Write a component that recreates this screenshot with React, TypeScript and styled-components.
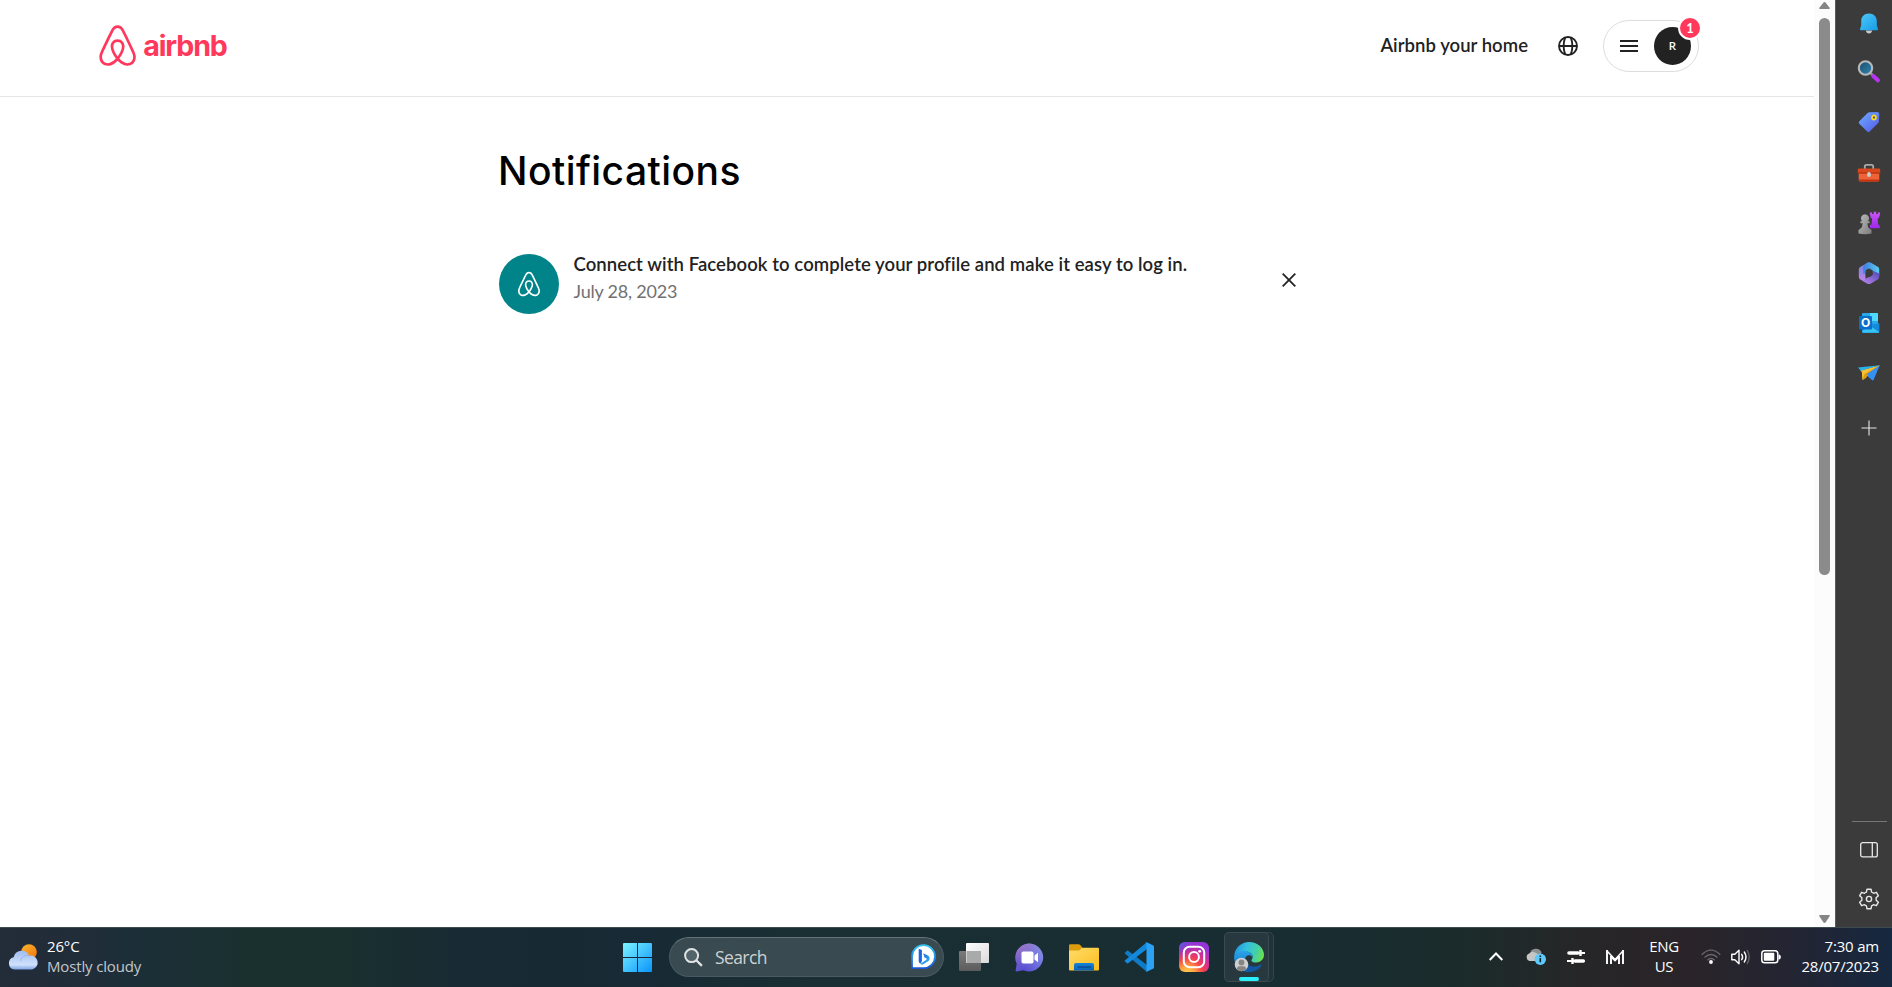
import React from 'react';
import styled, { createGlobalStyle } from 'styled-components';

const GlobalStyle = createGlobalStyle`
  *, *::before, *::after { box-sizing: border-box; }
  html, body { margin: 0; padding: 0; background: #fff; overflow: hidden; }
  svg { display: block; flex: none; overflow: visible; }
`;

const PAGE_FONT = `Lato, "Liberation Sans", sans-serif`;
const SYSTEM_FONT = `"Open Sans", "Noto Sans", sans-serif`;

const Screen = styled.div`
  display: grid;
  grid-template-rows: 927px 60px;
  width: 1892px;
  height: 987px;
`;

const Browser = styled.div`
  display: grid;
  grid-template-columns: 1814px 21px 57px;
`;

/* ---------- Page ---------- */

const Page = styled.div`
  display: flex;
  flex-direction: column;
  background: #fff;
  font-family: ${PAGE_FONT};
  color: #222;
`;

const Header = styled.header`
  display: flex;
  justify-content: space-between;
  align-items: flex-start;
  height: 97px;
  padding: 20px 115px 0 95.6px;
  border-bottom: 1px solid #e6e6e6;
`;

const Brand = styled.a`
  display: flex;
  align-items: center;
  height: 52px;
  color: #ff385c;
`;

const Wordmark = styled.span`
  margin: 0 0 0 4.500px;
  font: 700 28.6px/40px Inter, sans-serif;
  letter-spacing: -1.15px;
`;

const HeaderActions = styled.nav`
  display: flex;
  align-items: center;
  height: 52px;
`;

const HostLink = styled.a`
  margin: 0 30px 2px 0;
  font-size: 18.5px;
  font-weight: 600;
  line-height: 26px;
  letter-spacing: 0.04px;
  white-space: nowrap;
`;

const UserMenu = styled.div`
  position: relative;
  display: flex;
  align-items: center;
  justify-content: space-between;
  width: 96px;
  height: 52px;
  margin-left: 25px;
  padding: 0 7px 0 16px;
  border: 1px solid #ddd;
  border-radius: 26px;
`;

const Avatar = styled.div`
  display: grid;
  place-items: center;
  width: 37px;
  height: 38px;
  border-radius: 50%;
  background: #222;
  color: #fff;
  font-size: 11.5px;
  font-weight: 600;
  line-height: 14px;
`;

const CountBadge = styled.span`
  position: absolute;
  top: -5px;
  right: -4px;
  display: grid;
  place-items: center;
  width: 24px;
  height: 24px;
  border: 2px solid #fff;
  border-radius: 50%;
  background: #ff385c;
  color: #fff;
  font: 700 13px/14px ${PAGE_FONT};
`;

const Main = styled.main`
  width: 816px;
  margin-left: 499px;
  padding-top: 48px;
`;

const Title = styled.h1`
  height: 48px;
  margin: 0 0 57px -1px;
  font-family: Inter, sans-serif;
  font-size: 39px;
  font-weight: 500;
  line-height: 51px;
  letter-spacing: 0.45px;
  color: #000;
`;

const Notification = styled.article`
  display: flex;
  align-items: flex-start;
`;

const NotificationIcon = styled.div`
  display: grid;
  place-items: center;
  width: 60px;
  height: 60px;
  margin: 4px 14.500px 0 0;
  border-radius: 50%;
  background: #008489;
  color: #fff;
`;

const NotificationBody = styled.div`
  width: 708.500px;
  margin-top: 1px;
  line-height: 27px;
`;

const Message = styled.div`
  font-size: 18.5px;
  font-weight: 600;
  letter-spacing: 0.08px;
  white-space: nowrap;
`;

const DateText = styled.div`
  font-size: 18px;
  letter-spacing: -0.2px;
  color: #717171;
`;

const CloseButton = styled.button`
  margin: 23px 0 0;
  padding: 0;
  border: 0;
  background: none;
`;

/* ---------- Scrollbar ---------- */

const Scrollbar = styled.div`
  display: flex;
  flex-direction: column;
  align-items: center;
  padding: 2px 0 4px;
  background: #fcfcfc;
`;

const Thumb = styled.div`
  width: 11px;
  height: 557px;
  margin: 9px 0 auto;
  border-radius: 6px;
  background: #8b8b8b;
`;

/* ---------- Edge sidebar ---------- */

const Sidebar = styled.aside`
  display: grid;
  grid-template-rows: 45px 52px 50px 51px 49px 51px 50px 50px 59px 1fr 1px 56px 42px;
  justify-items: center;
  align-items: center;
  height: 927px;
  padding: 0 0 7px 10px;
  border-left: 1px solid #5a5a5a;
  background: #3b3b3b;
`;

const Spacer = styled.div``;

const Divider = styled.div`
  width: 35px;
  height: 1px;
  background: #767676;
`;

/* ---------- Taskbar ---------- */

const Taskbar = styled.footer`
  display: grid;
  grid-template-columns: 623px 652px 1fr;
  border-top: 1px solid #3d4c52;
  background: linear-gradient(90deg, #232c39 0, #212d39 90px, #1b2f38 135px, #1a302e 260px, #19302e 330px,
    #182a34 480px, #172a35 640px, #192f33 800px, #182d31 1300px, #1b2b2b 1460px, #262627 1580px, #2a2429 1690px,
    #222533 1800px, #162840 1892px);
  color: #fff;
  font-family: ${SYSTEM_FONT};
  font-size: 15px;
  line-height: 20px;
`;

const Weather = styled.div`
  display: flex;
  align-items: center;
  gap: 8.5px;
  padding: 0 0 2px 7.5px;
`;

const WeatherText = styled.div`
  margin-top: -2px;
  letter-spacing: -0.15px;
`;

const Condition = styled.div`
  color: #c3c8cb;
`;

const Apps = styled.div`
  display: flex;
  align-items: center;
  padding-bottom: 1px;
`;

const SearchBox = styled.div`
  display: flex;
  align-items: center;
  width: 275px;
  height: 40px;
  margin: 0 2.5px 0 17px;
  padding: 0 7px 0 14px;
  border: 1px solid #4a5a60;
  border-top-color: #66737a;
  border-radius: 20px;
  background: #394a50;
`;

const SearchLabel = styled.span`
  flex: 1;
  margin-left: 12px;
  font-size: 17.5px;
  letter-spacing: -0.6px;
  color: #cdd2d4;
`;

const AppSlot = styled.div`
  display: grid;
  place-items: center;
  width: 55px;
  height: 50px;
`;

const ActiveApp = styled.div`
  position: relative;
  display: grid;
  place-items: center;
  width: 50px;
  height: 50px;
  margin-left: 2.5px;
  border: 1px solid #33454a;
  border-radius: 5px;
  background: #203438;
`;

const ActiveWindow = styled.div`
  position: absolute;
  inset: -1px 4px -1px -1px;
  border: 1px solid #3b4b50;
  border-radius: 5px;
  background: #27393e;
`;

const ActiveIcon = styled.div`
  position: relative;
`;

const ActiveMark = styled.div`
  position: absolute;
  left: 14px;
  bottom: 0;
  width: 20px;
  height: 4px;
  border-radius: 2px;
  background: #2bf0fb;
`;

const Tray = styled.div`
  display: flex;
  align-items: center;
  justify-content: flex-end;
  padding: 0 13px 2px 0;
`;

const TrayItem = styled.div<{ $gap: number }>`
  margin-right: ${({ $gap }) => $gap}px;
`;

const Language = styled.div`
  width: 32px;
  margin: -1px 21px 0 0;
  letter-spacing: -0.3px;
  text-align: center;
`;

const Clock = styled.div`
  width: 78px;
  margin-top: -2px;
  letter-spacing: -0.2px;
  text-align: right;
  white-space: nowrap;
`;

/* ---------- Drawings ---------- */

const Belo = ({ size }: { size: number }) => (
  <svg width={size} height={size} viewBox="0 0 32 32" fill="currentColor">
    <path d="M16 1c2.008 0 3.463.963 4.751 3.269l.533 1.025c1.954 3.83 6.114 12.54 7.1 14.836l.145.353c.667 1.591.91 2.472.96 3.396l.01.415.001.228c0 4.062-2.877 6.478-6.357 6.478-2.224 0-4.556-1.258-6.709-3.386l-.257-.26-.172-.179h-.011l-.176.185c-2.044 2.1-4.267 3.42-6.414 3.615l-.28.019-.267.006C5.377 31 2.5 28.584 2.5 24.522l.005-.469c.026-.928.23-1.768.83-3.244l.216-.524c.966-2.298 6.083-12.989 7.707-16.034C12.537 1.963 13.992 1 16 1zm0 2c-1.239 0-2.053.539-2.987 2.21l-.523 1.008c-1.926 3.776-6.06 12.43-7.031 14.692l-.345.836c-.427 1.071-.573 1.655-.605 2.24l-.009.33v.206C4.5 27.395 6.411 29 8.857 29c1.773 0 3.87-1.236 5.831-3.354-2.295-2.938-3.855-6.45-3.855-8.91 0-2.913 1.933-5.386 5.178-5.42 3.223.034 5.156 2.507 5.156 5.42 0 2.456-1.555 5.96-3.855 8.91C19.277 27.766 21.37 29 23.142 29c2.447 0 4.358-1.605 4.358-4.478l-.004-.411c-.019-.672-.17-1.296-.714-2.62l-.248-.6c-1.065-2.478-5.993-12.768-7.538-15.664C18.053 3.539 17.24 3 16 3zm.01 10.316c-2.01.021-3.177 1.514-3.177 3.42 0 1.797 1.18 4.58 2.955 7.044l.21.287.174-.234c1.73-2.385 2.898-5.066 2.989-6.875l.006-.221c0-1.906-1.167-3.4-3.156-3.421z" />
  </svg>
);

const Globe = () => (
  <svg width="20" height="20" viewBox="0 0 20 20" fill="none" stroke="#222" strokeWidth="1.9">
    <circle cx="10" cy="10" r="9" />
    <path d="M1 10h18M7.2 1.4C5.2 6.8 5.2 13.200 7.200 18.600M12.800 1.400C14.800 6.800 14.800 13.200 12.800 18.600" />
  </svg>
);

const Hamburger = () => (
  <svg width="18" height="14" viewBox="0 0 18 14" stroke="#222" strokeWidth="2">
    <path d="M0 2h18M0 7h18M0 12h18" />
  </svg>
);

const Close = () => (
  <svg width="14" height="14" viewBox="0 0 14 14" stroke="#222" strokeWidth="1.800">
    <path d="M.7.7l12.600 12.600M13.300.7L.7 13.300" />
  </svg>
);

const ArrowUp = () => (
  <svg width="11" height="7" viewBox="0 0 11 7" fill="#858585">
    <path d="M5.500 0Q6.200 0 6.700.7L10.800 6Q11.100 7 10 7H1Q-.1 7 .2 6L4.300.7Q4.800 0 5.500 0z" />
  </svg>
);

const ArrowDown = () => (
  <svg width="11" height="8" viewBox="0 0 11 8" fill="#858585">
    <path d="M5.500 8Q4.800 8 4.300 7.300L.2 1.100Q-.1 0 1 0h9q1.100 0 .8 1.100L6.700 7.300Q6.200 8 5.500 8z" />
  </svg>
);

const Bell = () => (
  <svg width="24" height="24" viewBox="0 0 24 24">
    <defs>
      <linearGradient id="bell" x1="0" y1="0" x2="1" y2="1">
        <stop stopColor="#4fc8f5" />
        <stop offset="1" stopColor="#149be8" />
      </linearGradient>
    </defs>
    <path d="M8.800 19.500h6.400q-.6 3-3.200 3t-3.200-3z" fill="#c9c9c9" />
    <path d="M12 2.500c4.800 0 7.800 3.200 7.800 7.600v4.200l1.200 3.600q.3 1.400-1.100 1.400H4.100q-1.400 0-1.100-1.400l1.200-3.600v-4.200c0-4.400 3-7.600 7.800-7.600z" fill="url(#bell)" />
  </svg>
);

const SearchTool = () => (
  <svg width="24" height="24" viewBox="0 0 24 24">
    <defs>
      <linearGradient id="lens" x1="0" y1="0" x2="1" y2="1">
        <stop stopColor="#1d4d68" />
        <stop offset="1" stopColor="#2d86b5" />
      </linearGradient>
    </defs>
    <path d="M13.500 14l3.500 3.500" stroke="#8e8e8e" strokeWidth="2.500" />
    <path d="M16.500 17.200l4.400 4.100" stroke="#b733f2" strokeWidth="4.200" strokeLinecap="round" />
    <circle cx="8.500" cy="9" r="6.700" fill="url(#lens)" stroke="#b9b9b9" strokeWidth="2.100" />
  </svg>
);

const Tag = () => (
  <svg width="24" height="24" viewBox="0 0 24 24">
    <defs>
      <linearGradient id="tag" x1="0" y1="0" x2="1" y2="1">
        <stop stopColor="#6fb0ff" />
        <stop offset="1" stopColor="#5356e8" />
      </linearGradient>
    </defs>
    <path d="M12.500 2.200l8-.3q1.800 0 1.800 1.800l-.4 7.600q0 .9-.7 1.600l-8.600 8.700q-1.200 1.200-2.400 0L2.300 13.700q-1.200-1.200 0-2.400l8.600-8.500q.7-.6 1.600-.6z" fill="url(#tag)" />
    <circle cx="17" cy="7.500" r="2" fill="#4a4460" stroke="#f5d628" strokeWidth="1.800" />
  </svg>
);

const Toolbox = () => (
  <svg width="24" height="24" viewBox="0 0 24 24">
    <path d="M7.800 8V5.400q0-1.600 1.600-1.600h5.200q1.600 0 1.600 1.600V8" fill="none" stroke="#a9a9a9" strokeWidth="1.800" />
    <rect x="1.700" y="11" width="20.600" height="9.600" rx="1.500" fill="#ee6238" />
    <path d="M1.700 18.600h20.600q0 2-1.500 2H3.200q-1.500 0-1.500-2z" fill="#c8340f" />
    <rect x=".8" y="7.500" width="22.400" height="5" rx="1.200" fill="#d9481f" />
    <path d="M.8 11.500h22.400v1H.8z" fill="#a92c0a" />
    <rect x="10.200" y="11" width="3.600" height="5" rx="1.800" fill="#c8cdd0" />
  </svg>
);

const Chess = () => (
  <svg width="24" height="24" viewBox="0 0 24 24">
    <defs>
      <linearGradient id="rook" x1="0" y1="0" x2="0" y2="1">
        <stop stopColor="#c957f5" />
        <stop offset="1" stopColor="#9c28ec" />
      </linearGradient>
      <linearGradient id="pawn" x1="0" y1="0" x2="1" y2="1">
        <stop stopColor="#bcbcbc" />
        <stop offset="1" stopColor="#7d7d7d" />
      </linearGradient>
    </defs>
    <path d="M13 1.600l1.700-.4.500 1.800 1.500-.1V.8h2.600v2.100l1.500.1.500-1.800 1.700.4.200.9-1.200 4.200-1.400.9.500 5.600 1.700 1.500v2.500h-9.600l-.4-3 1.800-1 .5-5.600-1.400-.9L12.800 2.500z" fill="url(#rook)" />
    <path d="M8 3.200a4.200 4.200 0 0 1 3 7h1.600v2h-2.200q.2 4 1.700 5l2.400 1.800v3.600q-6.500 1.200-13 0V19l2.400-1.800q1.500-1 1.700-5H3.400v-2H5a4.200 4.200 0 0 1 3-7z" fill="url(#pawn)" />
  </svg>
);

const Microsoft365 = () => (
  <svg width="24" height="24" viewBox="0 0 24 24">
    <defs>
      <linearGradient id="mTop" x1="0" y1="0" x2="1" y2="0">
        <stop stopColor="#3d7dde" />
        <stop offset="1" stopColor="#5ccbf3" />
      </linearGradient>
      <linearGradient id="mLeft" x1="0" y1="0" x2="0" y2="1">
        <stop stopColor="#7187e4" />
        <stop offset="1" stopColor="#bf83e6" />
      </linearGradient>
      <linearGradient id="mRight" x1="0" y1="1" x2="1" y2="0">
        <stop stopColor="#bf86ea" />
        <stop offset="1" stopColor="#4b47b8" />
      </linearGradient>
    </defs>
    <path d="M11.500 1.300L3.200 5.900q-1.400.9-1.400 2.500v7.500q0 1.700 1.500 2.600l2.200 1.300q2.400.8 3-1.700V9.800z" fill="url(#mLeft)" />
    <path d="M10 1.800q2-1.100 4 0l6.700 4q1.500.9 1.500 2.600v6.200l-6.900-4-3.200-1.900q-2-.8-3.500 1.100L7.800 12.500 6.300 13V5.500z" fill="url(#mTop)" />
    <path d="M22.200 12.600v3.200q0 1.700-1.500 2.600l-6.700 4q-2 1.100-4 0l-4.800-2.700q2.500.5 3.300-2l6.800-3.900V9.500z" fill="url(#mRight)" />
    <path d="M8.700 10q0-.7.600-1l2-1.200q.7-.4 1.400 0l2.300 1.300q.7.400.7 1.200v3.200q0 .7-.6 1.100l-2.400 1.500q-.7.400-1.400 0L9.300 15q-.6-.4-.6-1.100z" fill="#3b3b3b" />
  </svg>
);

const OutlookLetter = styled.text`
  font: 700 12px Inter, sans-serif;
`;

const Outlook = () => (
  <svg width="24" height="24" viewBox="0 0 24 24">
    <rect x="5" y="2" width="16" height="13" rx="1" fill="#28a8ea" />
    <path d="M13 2h7q1 0 1 1v7h-8z" fill="#50d9ff" />
    <path d="M5 8h8v8H5z" fill="#0f78d4" />
    <path d="M5 12l17.200 1v7.800q0 1-1 1H5z" fill="#1490df" />
    <path d="M5 20l8-5.500 9.200 6.300q0 1-1 1H6z" fill="#36c4f5" />
    <path d="M15 16l7.200-4v9z" fill="#1588d8" />
    <rect x="2" y="5" width="13" height="13.500" rx="1.300" fill="#0a6fc9" />
    <OutlookLetter x="8.500" y="16" textAnchor="middle" fill="#fff">O</OutlookLetter>
  </svg>
);

const PaperPlane = () => (
  <svg width="24" height="24" viewBox="0 0 24 24">
    <path d="M9 13.800L22.800 4.200 16.500 19q-.5.800-1.300.3z" fill="#3590f2" />
    <path d="M3.500 9.500L22.800 4.200 5.800 19q-.9-1-.8-7.500z" fill="#f8c034" />
    <path d="M22.800 4.200L7.600 13q-1.200 2.500-1.800 6 3.800-1.600 4.800-4.600z" fill="#e0990d" />
    <path d="M22.800 4.200L9.600 13.300l3.400 3z" fill="#3590f2" />
    <path d="M1 6.500L22.800 4.200 3.700 9.700z" fill="#27b3ee" />
  </svg>
);

const Plus = () => (
  <svg width="16" height="16" viewBox="0 0 16 16" stroke="#e6e6e6" strokeWidth="1.100">
    <path d="M8 .5v15M.5 8h15" />
  </svg>
);

const PanelIcon = () => (
  <svg width="18" height="16" viewBox="0 0 18 16" fill="none" stroke="#e8e8e8" strokeWidth="1.300">
    <rect x=".7" y=".7" width="16.600" height="14.200" rx="2" />
    <path d="M12.300.7v14.200" />
  </svg>
);

const Gear = () => (
  <svg width="22" height="22" viewBox="0 0 22 22" fill="none" stroke="#e8e8e8" strokeWidth="1.400" strokeLinejoin="round">
    <path d="M9 1.200h4l.6 3q.9.300 1.900 1.100l2.900-1 2 3.500-2.300 2q.2 1.200 0 2.400l2.300 2-2 3.500-2.900-1q-1 .8-1.900 1.100l-.6 3H9l-.6-3q-.9-.3-1.900-1.100l-2.900 1-2-3.500 2.300-2q-.2-1.200 0-2.400l-2.300-2 2-3.500 2.900 1q1-.8 1.900-1.100z" />
    <circle cx="11" cy="11" r="2.600" />
  </svg>
);

const CloudSun = () => (
  <svg width="31" height="26" viewBox="0 0 31 26">
    <defs>
      <linearGradient id="sun" x1="0" y1="0" x2="1" y2="1">
        <stop stopColor="#fcb72b" />
        <stop offset="1" stopColor="#f0720f" />
      </linearGradient>
      <linearGradient id="cloud" x1="0" y1="0" x2="0" y2="1">
        <stop stopColor="#9fbdf2" />
        <stop offset=".75" stopColor="#cfe0fb" />
        <stop offset="1" stopColor="#7fa3e6" />
      </linearGradient>
    </defs>
    <circle cx="21" cy="8" r="7.800" fill="url(#sun)" />
    <path d="M6.500 25.500a6.200 6.200 0 0 1-.8-12.200 8 8 0 0 1 15.300-1.600 7 7 0 0 1 3.200 13.800z" fill="url(#cloud)" />
    <path d="M12.500 17a6.500 6.500 0 0 1 8.500-5.300" fill="none" stroke="#8fb0ec" strokeWidth=".8" />
  </svg>
);

const WindowsLogo = () => (
  <svg width="29" height="29" viewBox="0 0 29 29">
    <defs>
      <linearGradient id="win" x1="0" y1="0" x2="29" y2="29" gradientUnits="userSpaceOnUse">
        <stop stopColor="#7df3ff" />
        <stop offset="1" stopColor="#0a94fb" />
      </linearGradient>
    </defs>
    <path d="M1 0h13v14H0V1q0-1 1-1zM15 0h13q1 0 1 1v13H15zM0 15h14v14H1q-1 0-1-1zM15 15h14v13q0 1-1 1H15z" fill="url(#win)" />
  </svg>
);

const Magnifier = () => (
  <svg width="19" height="19" viewBox="0 0 19 19" fill="none" stroke="#e0e4e5" strokeWidth="2">
    <circle cx="7.600" cy="7.600" r="6.500" fill="#53636a" />
    <path d="M12.300 12.300l5.600 5.600" strokeWidth="2.300" />
  </svg>
);

const Bing = () => (
  <svg width="25" height="26" viewBox="0 0 25 26">
    <defs>
      <linearGradient id="bingRing" x1="0" y1="0" x2="0" y2="1">
        <stop stopColor="#35c5f2" />
        <stop offset="1" stopColor="#1857d6" />
      </linearGradient>
      <linearGradient id="bingB" x1="0" y1="0" x2="1" y2="1">
        <stop stopColor="#1660dc" />
        <stop offset="1" stopColor="#36b9f3" />
      </linearGradient>
    </defs>
    <path d="M1 12.500a11.500 11.500 0 1 1 11.500 11.700H1z" fill="#fff" stroke="url(#bingRing)" strokeWidth="1.800" />
    <path d="M7.700 4.800l3.200 1.200v10.300q0 2-1.300 3.300-1.900-.5-1.900-2.600z" fill="#1a66de" />
    <path d="M12.200 9.300l4.700 2.200q1.900 1 1.700 3.200 0 1.500-1.500 2.500l-4.600 2.700q-1.900 1-3.300.2l6.200-4.300q.8-.8-.2-1.500l-1.700-.9z" fill="url(#bingB)" />
  </svg>
);

const TaskView = () => (
  <svg width="30" height="28" viewBox="0 0 30 28">
    <defs>
      <linearGradient id="tvFront" x1="0" y1="0" x2="0" y2="1">
        <stop stopColor="#7b7b7b" />
        <stop offset="1" stopColor="#5c5c5c" />
      </linearGradient>
      <linearGradient id="tvBack" x1="0" y1="0" x2="1" y2="1">
        <stop stopColor="#fff" />
        <stop offset="1" stopColor="#dadada" />
      </linearGradient>
    </defs>
    <rect x="0" y="8" width="22" height="20" rx="1" fill="url(#tvFront)" />
    <rect x="7" y="0" width="23" height="20" rx="1" fill="url(#tvBack)" />
    <path d="M7.500 8H22v12H8.500q-1 0-1-1z" fill="#a9abab" />
  </svg>
);

const Chat = () => (
  <svg width="29" height="29" viewBox="0 0 29 29">
    <defs>
      <linearGradient id="chat" x1="0" y1="1" x2="1" y2="0">
        <stop offset=".2" stopColor="#5a4fd0" />
        <stop offset="1" stopColor="#8fa0ee" />
      </linearGradient>
      <linearGradient id="chatTint" x1="0" y1="0" x2=".6" y2=".7">
        <stop stopColor="#b578b8" />
        <stop offset="1" stopColor="#7366d2" stopOpacity="0" />
      </linearGradient>
    </defs>
    <path d="M14.500.5a14 14 0 1 1-6 26.800L1.500 28.400q-1 0-.9-1l1.200-6.600A14 14 0 0 1 14.500.5z" fill="url(#chat)" />
    <path d="M14.500.5a14 14 0 1 1-6 26.800L1.500 28.400q-1 0-.9-1l1.200-6.600A14 14 0 0 1 14.500.5z" fill="url(#chatTint)" />
    <rect x="6.500" y="8.500" width="12" height="12" rx="1.800" fill="#fff" />
    <path d="M19.500 12.500l3.500-2.800v9.600l-3.500-2.800z" fill="#fff" />
  </svg>
);

const Folder = () => (
  <svg width="30" height="27" viewBox="0 0 30 27">
    <defs>
      <linearGradient id="folder" x1="0" y1="0" x2="1" y2="1">
        <stop stopColor="#ffdc6a" />
        <stop offset="1" stopColor="#fbbd1c" />
      </linearGradient>
      <linearGradient id="folderBase" x1="0" y1="0" x2="0" y2="1">
        <stop stopColor="#1583d8" />
        <stop offset="1" stopColor="#0a62b8" />
      </linearGradient>
    </defs>
    <path d="M0 1.500Q0 .3 1.200.3h8.300q1 0 1.700.8l2.600 3H29V10H0z" fill="#dd9c0c" />
    <path d="M0 6.500h9.500q1 0 1.800-.9l1-1q.8-.8 1.900-.8H29q1 0 1 1v20.700q0 1-1 1H1q-1 0-1-1z" fill="url(#folder)" />
    <path d="M5 26.500V21q0-2 2-2h16q2 0 2 2v5.500z" fill="url(#folderBase)" />
    <path d="M9 23h12.500" stroke="#0a4e97" strokeWidth="1.500" strokeLinecap="round" />
  </svg>
);

const VSCode = () => (
  <svg width="30" height="30" viewBox="0 0 30 30">
    <path d="M1.400 10.200l1.500-1.400q.6-.5 1.300 0L23 23v6.200q-.9.200-1.700-.6L.8 11.500q-.4-.7.6-1.300z" fill="#0f7ac6" />
    <path d="M1.400 19.800l1.500 1.400q.6.500 1.300 0L23 7V.8q-.9-.2-1.700.6L.8 18.500q-.4.700.6 1.300z" fill="#1289dc" />
    <path d="M21.200 29.300q1 .8 2 .3l5.800-2.800q1-.5 1-1.600V4.800q0-1.100-1-1.600L23.200.4q-1-.5-2 .3 1.300-.5 1.300 1v26.600q0 1.500-1.300 1z" fill="#2ba2f5" />
  </svg>
);

const Instagram = () => (
  <svg width="30" height="30" viewBox="0 0 30 30">
    <defs>
      <radialGradient id="ig" cx=".27" cy="1.080" r="1.050">
        <stop stopColor="#ffd75a" />
        <stop offset=".25" stopColor="#fda43c" />
        <stop offset=".5" stopColor="#f8434d" />
        <stop offset=".75" stopColor="#cf2e97" />
        <stop offset="1" stopColor="#9534d6" />
      </radialGradient>
      <radialGradient id="igBlue" cx="-.05" cy="0" r=".6">
        <stop stopColor="#4269e0" />
        <stop offset="1" stopColor="#7a3ae0" stopOpacity="0" />
      </radialGradient>
    </defs>
    <rect width="30" height="30" rx="6" fill="url(#ig)" />
    <rect width="30" height="30" rx="6" fill="url(#igBlue)" />
    <g fill="none" stroke="#fff" strokeWidth="2">
      <rect x="4.800" y="4.800" width="20.400" height="20.400" rx="5.800" />
      <circle cx="15" cy="15" r="4.900" />
    </g>
    <circle cx="20.700" cy="9.300" r="1.400" fill="#fff" />
  </svg>
);

const Edge = () => (
  <svg width="30" height="30" viewBox="0 0 30 30">
    <defs>
      <linearGradient id="edgeTop" x1="0" y1=".3" x2="1" y2=".5">
        <stop stopColor="#2294dc" />
        <stop offset=".4" stopColor="#35c1dd" />
        <stop offset=".75" stopColor="#45d0a8" />
        <stop offset="1" stopColor="#6ae04c" />
      </linearGradient>
      <linearGradient id="edgeBody" x1="0" y1="0" x2="0" y2="1">
        <stop stopColor="#2ba5ea" />
        <stop offset="1" stopColor="#0c6cc4" />
      </linearGradient>
    </defs>
    <path d="M.2 13.500C1 5.500 7.500 0 15 0c8.500 0 15 6 15 12.800 0 4.700-3.600 7.700-8 7.700-3.500 0-5.200-1.300-4.300-2.700 2.800-4-.6-8.300-6-8.300C6 9.500 1.500 12 .2 13.500z" fill="url(#edgeTop)" />
    <path d="M.2 13.500C2.500 9.800 6.500 8.300 10.700 8.700c4.300.3 7.700 3 7.800 6.300-2.500-3-7-2.200-7.400 2.300C10.500 23.500 16 28 22.500 27.500 19 30 14.500 30.500 10.500 29.300 3.500 27.300-.6 20.500.2 13.500z" fill="url(#edgeBody)" />
    <path d="M11.100 17.300c0 4.500 4.200 7.700 9.500 7.200 2.800-.3 4.800-1.300 6.300-2 .8-.3 1.200.3.700 1C25.600 27 21 30 15.500 30c-6-2-8.400-10-4.400-12.700z" fill="#1157a3" />
    <circle cx="7.500" cy="22.500" r="6.800" fill="#cfcfcf" />
    <circle cx="7.500" cy="20.500" r="2.900" fill="#858585" />
    <path d="M2.800 27.300q.4-3 2.500-3h4.400q2.100 0 2.500 3a6.800 6.800 0 0 1-9.400 0z" fill="#858585" />
  </svg>
);

const Chevron = () => (
  <svg width="14" height="9" viewBox="0 0 14 9" fill="none" stroke="#fff" strokeWidth="2">
    <path d="M.7 8L7 1.500 13.300 8" />
  </svg>
);

const OneDrive = () => (
  <svg width="20" height="17" viewBox="0 0 20 17">
    <path d="M4 6a6 6 0 0 1 11.500-1.500L13 10z" fill="#8e9090" />
    <path d="M3.500 13a4 4 0 0 1-.3-7.600A5 5 0 0 1 9 4.500L16 8v5z" fill="#c4c6c6" />
    <circle cx="14.300" cy="11.200" r="5.700" fill="#5ccbfc" />
    <path d="M14.300 10v4.300M14.300 7.400v1.500" stroke="#12242e" strokeWidth="1.600" />
  </svg>
);

const Sliders = () => (
  <svg width="18" height="16" viewBox="0 0 18 16" fill="none" stroke="#fff">
    <path d="M2 4h9" strokeWidth="3.600" strokeLinecap="round" />
    <path d="M11 4h7M0 12h7" strokeWidth="2" />
    <path d="M8 12h8.300" strokeWidth="3.600" strokeLinecap="round" />
    <path d="M13.500 1v6M5.500 9v6" strokeWidth="2.400" />
  </svg>
);

const MeterLogo = () => (
  <svg width="18" height="14" viewBox="0 0 18 14" fill="none" stroke="#fff">
    <path d="M1 0v14M17 0v14" strokeWidth="1.900" />
    <path d="M5 14V6M13 6v8" strokeWidth="1.900" />
    <path d="M1.500 1.500L9 9.500l7.500-8" strokeWidth="1.500" />
    <path d="M5 6.500l4 4 4-4" strokeWidth="1.900" />
  </svg>
);

const Wifi = () => (
  <svg width="20" height="15" viewBox="0 0 20 15" fill="none" stroke="#68666a" strokeWidth="1.400">
    <path d="M.7 5.800Q10-3.600 19.300 5.800M3.500 8.600q6.500-6.300 13 0M6.300 11.200q3.700-3.300 7.400 0" />
    <circle cx="10" cy="13" r="1.900" fill="#fff" stroke="none" />
  </svg>
);

const Volume = () => (
  <svg width="20" height="16" viewBox="0 0 20 16" fill="none" stroke="#fff" strokeWidth="1.400" strokeLinejoin="round">
    <path d="M.8 5.300h3L8 1.300v13.400l-4.200-4h-3z" />
    <path d="M10.700 5.300q1.800 2.700 0 5.400M13.300 3q3.400 5 0 10" strokeLinecap="round" />
    <path d="M16 1q4.500 7 0 14" stroke="#5e5c62" />
  </svg>
);

const Battery = () => (
  <svg width="20" height="14" viewBox="0 0 20 14" fill="none">
    <rect x=".8" y=".8" width="16" height="12" rx="2.800" stroke="#fff" strokeWidth="1.500" />
    <rect x="2.800" y="2.800" width="10.500" height="8" rx="1" fill="#fff" />
    <path d="M17.600 4.500h.6q1.700.5 1.700 2.500t-1.700 2.500h-.6z" fill="#fff" />
  </svg>
);

export default function App() {
  return (
    <Screen>
      <GlobalStyle />
      <Browser>
        <Page>
          <Header>
            <Brand>
              <Belo size={43.2} />
              <Wordmark>airbnb</Wordmark>
            </Brand>
            <HeaderActions>
              <HostLink>Airbnb your home</HostLink>
              <Globe />
              <UserMenu>
                <Hamburger />
                <Avatar>R</Avatar>
                <CountBadge>1</CountBadge>
              </UserMenu>
            </HeaderActions>
          </Header>
          <Main>
            <Title>Notifications</Title>
            <Notification>
              <NotificationIcon>
                <Belo size={26} />
              </NotificationIcon>
              <NotificationBody>
                <Message>Connect with Facebook to complete your profile and make it easy to log in.</Message>
                <DateText>July 28, 2023</DateText>
              </NotificationBody>
              <CloseButton aria-label="Dismiss">
                <Close />
              </CloseButton>
            </Notification>
          </Main>
        </Page>
        <Scrollbar>
          <ArrowUp />
          <Thumb />
          <ArrowDown />
        </Scrollbar>
        <Sidebar>
          <Bell />
          <SearchTool />
          <Tag />
          <Toolbox />
          <Chess />
          <Microsoft365 />
          <Outlook />
          <PaperPlane />
          <Plus />
          <Spacer />
          <Divider />
          <PanelIcon />
          <Gear />
        </Sidebar>
      </Browser>
      <Taskbar>
        <Weather>
          <CloudSun />
          <WeatherText>
            <div>26°C</div>
            <Condition>Mostly cloudy</Condition>
          </WeatherText>
        </Weather>
        <Apps>
          <WindowsLogo />
          <SearchBox>
            <Magnifier />
            <SearchLabel>Search</SearchLabel>
            <Bing />
          </SearchBox>
          <AppSlot><TaskView /></AppSlot>
          <AppSlot><Chat /></AppSlot>
          <AppSlot><Folder /></AppSlot>
          <AppSlot><VSCode /></AppSlot>
          <AppSlot><Instagram /></AppSlot>
          <ActiveApp>
            <ActiveWindow />
            <ActiveIcon><Edge /></ActiveIcon>
            <ActiveMark />
          </ActiveApp>
        </Apps>
        <Tray>
          <TrayItem $gap={23}><Chevron /></TrayItem>
          <TrayItem $gap={21}><OneDrive /></TrayItem>
          <TrayItem $gap={21}><Sliders /></TrayItem>
          <TrayItem $gap={24}><MeterLogo /></TrayItem>
          <Language>
            <div>ENG</div>
            <div>US</div>
          </Language>
          <TrayItem $gap={10}><Wifi /></TrayItem>
          <TrayItem $gap={10}><Volume /></TrayItem>
          <TrayItem $gap={20}><Battery /></TrayItem>
          <Clock>
            <div>7:30 am</div>
            <div>28/07/2023</div>
          </Clock>
        </Tray>
      </Taskbar>
    </Screen>
  );
}
